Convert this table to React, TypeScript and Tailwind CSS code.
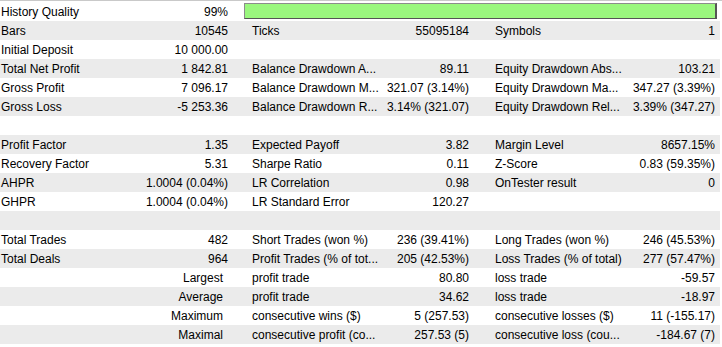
import React from "react";

type Row = (string | null)[];

const rows: Row[] = [
  ["Bars", "10545", "Ticks", "55095184", "Symbols", "1"],
  ["Initial Deposit", "10 000.00", "", "", "", ""],
  ["Total Net Profit", "1 842.81", "Balance Drawdown A...", "89.11", "Equity Drawdown Abs...", "103.21"],
  ["Gross Profit", "7 096.17", "Balance Drawdown M...", "321.07 (3.14%)", "Equity Drawdown Ma...", "347.27 (3.39%)"],
  ["Gross Loss", "-5 253.36", "Balance Drawdown R...", "3.14% (321.07)", "Equity Drawdown Rel...", "3.39% (347.27)"],
  ["", "", "", "", "", ""],
  ["Profit Factor", "1.35", "Expected Payoff", "3.82", "Margin Level", "8657.15%"],
  ["Recovery Factor", "5.31", "Sharpe Ratio", "0.11", "Z-Score", "0.83 (59.35%)"],
  ["AHPR", "1.0004 (0.04%)", "LR Correlation", "0.98", "OnTester result", "0"],
  ["GHPR", "1.0004 (0.04%)", "LR Standard Error", "120.27", "", ""],
  ["", "", "", "", "", ""],
  ["Total Trades", "482", "Short Trades (won %)", "236 (39.41%)", "Long Trades (won %)", "246 (45.53%)"],
  ["Total Deals", "964", "Profit Trades (% of tot...", "205 (42.53%)", "Loss Trades (% of total)", "277 (57.47%)"],
  [null, "Largest", "profit trade", "80.80", "loss trade", "-59.57"],
  [null, "Average", "profit trade", "34.62", "loss trade", "-18.97"],
  [null, "Maximum", "consecutive wins ($)", "5 (257.53)", "consecutive losses ($)", "11 (-155.17)"],
  [null, "Maximal", "consecutive profit (co...", "257.53 (5)", "consecutive loss (cou...", "-184.67 (7)"],
];

const cellPad = ["pl-px", "pr-3 text-right", "pl-3", "pr-3 text-right", "pl-[14px]", "pr-[5px] text-right"];

const Cell = ({ text, i }: { text: string; i: number }) => (
  <div className={`h-[19px] pt-px leading-[18px] whitespace-nowrap ${cellPad[i]}`}>{text}</div>
);

const App = () => {
  return (
    <div
      className="w-[722px] h-[347px] bg-white text-black text-[12px]"
      style={{ fontFamily: '"Liberation Sans", Arial, sans-serif' }}
    >
      <div className="h-[2px] border-t border-[#c9c9c9]" />
      <div className="w-[720px] grid grid-cols-[120px_120px_140px_101px_139px_100px]">
        <Cell text="History Quality" i={0} />
        <Cell text="99%" i={1} />
        <div className="col-span-4 h-[19px] pl-1 pr-[3px] pt-px">
          <div className="h-[16px] bg-[#9af77e] border border-t-[#8c8c8c] border-l-[#8c8c8c] border-r-[#555555] border-b-[#555555] border-r-2" />
        </div>
        {rows.map((r, ri) => {
          const bg = ri % 2 === 0 ? "bg-[#ebebeb]" : "bg-white";
          return (
            <div key={ri} className={`col-span-6 grid grid-cols-subgrid ${bg}`}>
              {r[0] === null ? (
                <div className="col-span-2 h-[19px] pt-px leading-[18px] text-right pr-[17px] whitespace-nowrap">{r[1]}</div>
              ) : (
                <>
                  <Cell text={r[0]} i={0} />
                  <Cell text={r[1] ?? ""} i={1} />
                </>
              )}
              {r.slice(2).map((c, ci) => (
                <Cell key={ci} text={c ?? ""} i={ci + 2} />
              ))}
            </div>
          );
        })}
      </div>
    </div>
  );
};

export default App;
